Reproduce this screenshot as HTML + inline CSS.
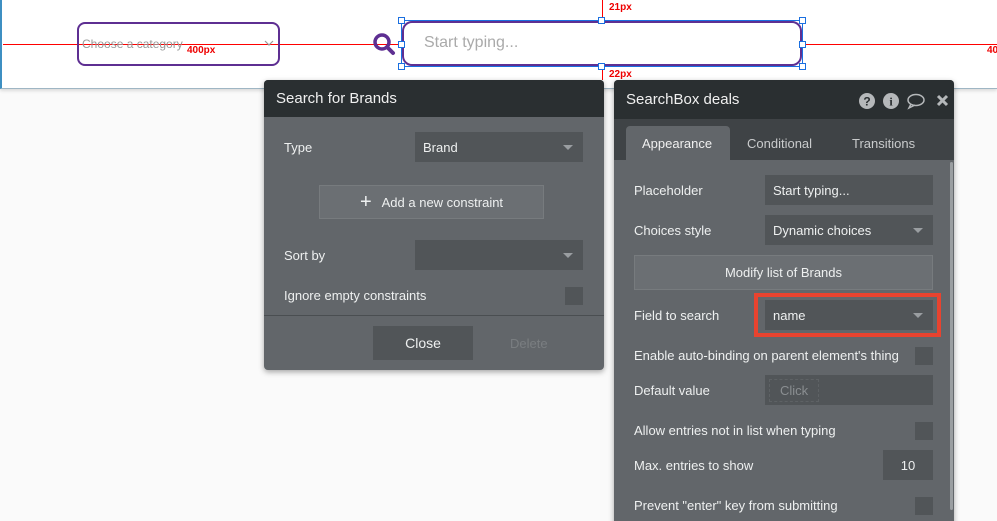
<!DOCTYPE html>
<html><head><style>
*{box-sizing:border-box;margin:0;padding:0}
html,body{width:997px;height:521px;overflow:hidden}
body{background:#fafafa;font-family:"Liberation Sans",sans-serif;position:relative}
.a{position:absolute}
.top{left:0;top:0;width:997px;height:89px;background:#fff;border-bottom:1px solid #9fb6c4;border-left:2px solid #3d8fc2;box-shadow:0 2px 3px rgba(0,0,0,.12)}
.h{position:absolute;width:7px;height:7px;border:1px solid #1a6fe0;background:#fff}
.lbl{position:absolute;color:#eef0f0;font-size:13px}
.sel{position:absolute;background:#515558;color:#eef0f0;font-size:13px;padding-left:8px;display:flex;align-items:center}
.tri{position:absolute;right:10px;top:50%;margin-top:-2px;border-left:5px solid transparent;border-right:5px solid transparent;border-top:5px solid #9a9ea1}
.cb{position:absolute;width:18px;height:18px;background:#515558}
.panel{background:#62666a;border-radius:4px;box-shadow:0 2px 6px rgba(0,0,0,.35);overflow:hidden}
.hd{position:absolute;left:0;top:0;width:100%;background:#2a2f31;color:#f0f0f0;font-size:15px;padding-left:12px;display:flex;align-items:center}
</style></head><body>
<div class="a top"></div>
<div class="a" style="left:3px;top:44px;width:398px;height:1px;background:#f00"></div>
<div class="a" style="left:803px;top:44px;width:194px;height:1px;background:#f00"></div>
<div class="a" style="left:602px;top:0;width:1px;height:18px;background:#f00"></div>
<div class="a" style="left:602px;top:67px;width:1px;height:13px;background:#f00"></div>
<div class="a" style="left:609px;top:2px;color:#e00;font-size:10px;font-weight:bold">21px</div>
<div class="a" style="left:609px;top:69px;color:#e00;font-size:10px;font-weight:bold">22px</div>
<div class="a" style="left:987px;top:45px;color:#e00;font-size:10px;font-weight:bold">40</div>
<div class="a" style="left:77px;top:22px;width:203px;height:44px;border:2px solid #5e2f92;border-radius:8px"></div>
<div class="a" style="left:82px;top:37px;color:#999;font-size:12px">Choose a category</div>
<div class="a" style="left:187px;top:45px;color:#e00;font-size:10px;font-weight:bold">400px</div>
<svg class="a" style="left:264px;top:40px" width="10" height="6" viewBox="0 0 10 6"><path d="M1 1 L5 5 L9 1" fill="none" stroke="#999" stroke-width="1.2"/></svg>
<svg class="a" style="left:372px;top:32px" width="26" height="24" viewBox="0 0 26 24"><circle cx="10" cy="10" r="7" fill="none" stroke="#5e2f92" stroke-width="3.5"/><path d="M15 15 L21 21" stroke="#5e2f92" stroke-width="4" stroke-linecap="round"/></svg>
<div class="a" style="left:401px;top:20px;width:402px;height:47px;border:1px solid #1a6fe0"></div>
<div class="a" style="left:402px;top:21px;width:400px;height:45px;border:2px solid #5e2f92;border-radius:10px;background:#fff"></div>
<div class="a" style="left:424px;top:34px;color:#aaa;font-size:16px">Start typing...</div>
<div class="h" style="left:398px;top:17px"></div><div class="h" style="left:598px;top:17px"></div><div class="h" style="left:799px;top:17px"></div>
<div class="h" style="left:398px;top:41px"></div><div class="h" style="left:799px;top:41px"></div>
<div class="h" style="left:398px;top:63px"></div><div class="h" style="left:598px;top:63px"></div><div class="h" style="left:799px;top:63px"></div>

<div class="a panel" style="left:264px;top:80px;width:340px;height:290px">
<div class="hd" style="height:37px">Search for Brands</div>
<div class="lbl" style="left:20px;top:60px">Type</div>
<div class="sel" style="left:151px;top:52px;width:168px;height:30px">Brand<div class="tri"></div></div>
<div class="a" style="left:55px;top:105px;width:225px;height:34px;background:#6b6f73;border:1px solid #777b7e;color:#eef0f0;font-size:13px;display:flex;align-items:center;justify-content:center"><span style="font-size:20px;margin-right:10px;line-height:1">+</span>Add a new constraint</div>
<div class="lbl" style="left:20px;top:168px">Sort by</div>
<div class="sel" style="left:151px;top:160px;width:168px;height:30px"><div class="tri"></div></div>
<div class="lbl" style="left:20px;top:208px">Ignore empty constraints</div>
<div class="cb" style="left:301px;top:207px"></div>
<div class="a" style="left:0;top:235px;width:340px;height:1px;background:#4a4e51"></div>
<div class="a" style="left:109px;top:246px;width:100px;height:34px;background:#515558;color:#eef0f0;font-size:14px;display:flex;align-items:center;justify-content:center">Close</div>
<div class="a" style="left:246px;top:256px;color:#7a7e81;font-size:13px">Delete</div>
</div>

<div class="a panel" style="left:614px;top:80px;width:340px;height:450px">
<div class="hd" style="height:39px">SearchBox deals</div>
<svg class="a" style="left:244px;top:12px" width="92" height="18" viewBox="0 0 92 18"><circle cx="9" cy="9" r="8" fill="#b5b8ba"/><text x="9" y="13.5" font-size="12" font-weight="bold" fill="#2a2f31" text-anchor="middle" font-family="Liberation Sans">?</text><circle cx="33" cy="9" r="8" fill="#b5b8ba"/><text x="33" y="13.5" font-size="12" font-weight="bold" fill="#2a2f31" text-anchor="middle" font-family="Liberation Serif">i</text><ellipse cx="58" cy="8" rx="8" ry="5.5" fill="none" stroke="#b5b8ba" stroke-width="1.5"/><path d="M53 12 L51 16 L57 13" fill="none" stroke="#b5b8ba" stroke-width="1.5"/><path d="M80 4 L89 13 M89 4 L80 13" stroke="#b5b8ba" stroke-width="3"/></svg>
<div class="a" style="left:0;top:39px;width:340px;height:41px;background:#3f4346"></div>
<div class="a" style="left:12px;top:46px;width:104px;height:34px;background:#62666a;border-radius:4px 4px 0 0"></div>
<div class="a" style="left:28px;top:56px;color:#f0f0f0;font-size:13px">Appearance</div>
<div class="a" style="left:133px;top:56px;color:#c9cbcc;font-size:13px">Conditional</div>
<div class="a" style="left:238px;top:56px;color:#c9cbcc;font-size:13px">Transitions</div>
<div class="a" style="left:336px;top:82px;width:3px;height:348px;background:#9a9ea1;border-radius:2px"></div>
<div class="lbl" style="left:20px;top:103px">Placeholder</div>
<div class="sel" style="left:151px;top:95px;width:168px;height:30px">Start typing...</div>
<div class="lbl" style="left:20px;top:143px">Choices style</div>
<div class="sel" style="left:151px;top:135px;width:168px;height:30px">Dynamic choices<div class="tri"></div></div>
<div class="a" style="left:20px;top:175px;width:299px;height:35px;background:#6b6f73;border:1px solid #777b7e;color:#eef0f0;font-size:13px;display:flex;align-items:center;justify-content:center">Modify list of Brands</div>
<div class="lbl" style="left:20px;top:228px">Field to search</div>
<div class="a" style="left:140px;top:213px;width:187px;height:44px;border:4px solid #e8432f"></div>
<div class="sel" style="left:151px;top:220px;width:168px;height:30px">name<div class="tri"></div></div>
<div class="lbl" style="left:20px;top:268px">Enable auto-binding on parent element's thing</div>
<div class="cb" style="left:301px;top:267px"></div>
<div class="lbl" style="left:20px;top:303px">Default value</div>
<div class="sel" style="left:151px;top:295px;width:168px;height:30px;padding-left:4px"><span style="border:1px dashed #5e6265;padding:3px 10px;color:#8a8e91">Click</span></div>
<div class="lbl" style="left:20px;top:343px">Allow entries not in list when typing</div>
<div class="cb" style="left:301px;top:342px"></div>
<div class="lbl" style="left:20px;top:378px">Max. entries to show</div>
<div class="sel" style="left:269px;top:370px;width:50px;height:30px;justify-content:center;padding:0">10</div>
<div class="lbl" style="left:20px;top:418px">Prevent "enter" key from submitting</div>
<div class="cb" style="left:301px;top:417px"></div>
</div>
</body></html>
